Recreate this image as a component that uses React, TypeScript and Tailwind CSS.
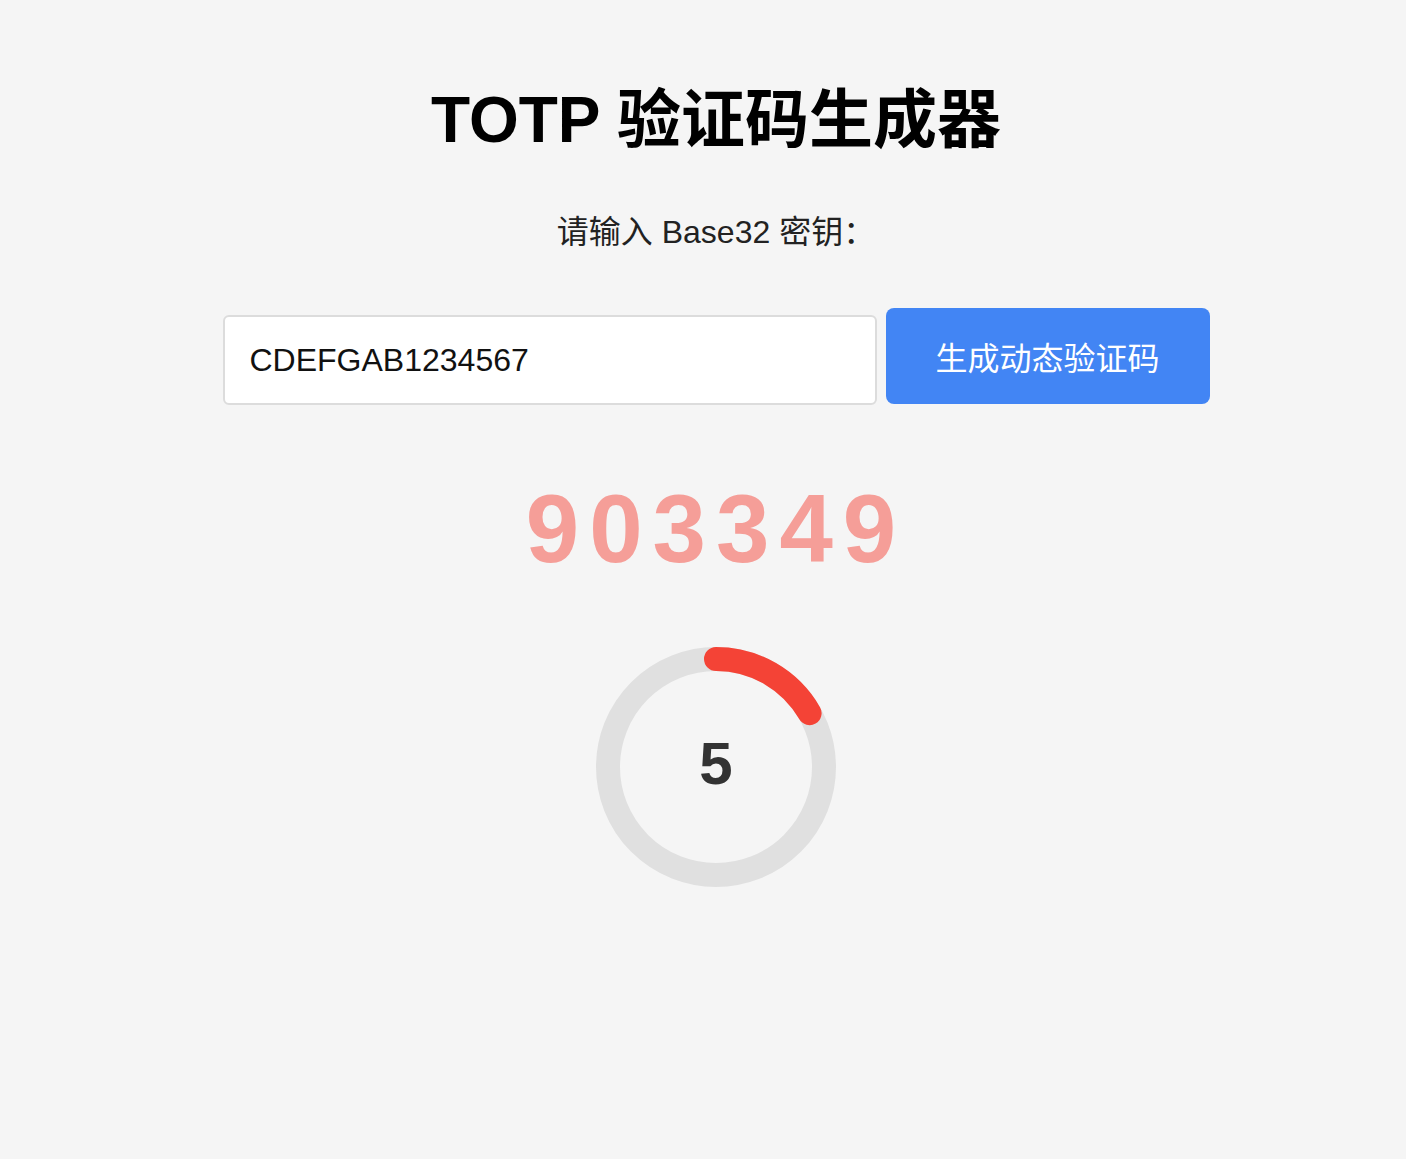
import { useState } from "react"

const font = { fontFamily: '"Liberation Sans", Arial, "Noto Sans CJK SC", sans-serif' }

function Countdown({ seconds, period }: { seconds: number; period: number }) {
  const r = 108
  const c = 2 * Math.PI * r
  const progress = seconds / period
  return (
    <div className="relative w-[240px] h-[240px]">
      <svg width="240" height="240" viewBox="0 0 240 240" className="-rotate-90">
        <circle cx="120" cy="120" r={r} fill="none" stroke="#e0e0e0" strokeWidth="24" />
        <circle
          cx="120"
          cy="120"
          r={r}
          fill="none"
          stroke="#f44336"
          strokeWidth="24"
          strokeLinecap="round"
          strokeDasharray={`${c * progress} ${c}`}
        />
      </svg>
      <div className="absolute inset-0 flex items-center justify-center">
        <span className="text-[60px] leading-none font-bold text-[#333] mt-[-6px]">{seconds}</span>
      </div>
    </div>
  )
}

export default function App() {
  const [secret, setSecret] = useState("CDEFGAB1234567")
  const code = "903349"

  return (
    <div className="min-h-[1159px] bg-[#f5f5f5] text-black" style={font}>
      <div className="flex flex-col items-center pl-[26px] pt-[88px]">
        <h1 className="text-[64px] leading-none font-bold">TOTP 验证码生成器</h1>

        <p className="mt-[64px] text-[32px] leading-none text-[#222]">请输入 Base32 密钥：</p>

        <div className="mt-[60px] flex items-end gap-[9px]">
          <input
            value={secret}
            onChange={e => setSecret(e.target.value)}
            className="w-[654px] h-[90px] px-[25px] text-[32px] bg-white border-2 border-[#dcdcdc] rounded-[6px] outline-none text-[#111]"
            style={font}
          />
          <button className="mb-px w-[324px] h-[96px] pt-[6px] bg-[#4285f4] text-white text-[32px] rounded-[8px]">
            生成动态验证码
          </button>
        </div>

        <div className="mt-[76px] text-[96px] leading-none font-bold tracking-[10px] text-[#f59e98]">
          {code}
        </div>

        <div className="mt-[70px]">
          <Countdown seconds={5} period={30} />
        </div>
      </div>
    </div>
  )
}
